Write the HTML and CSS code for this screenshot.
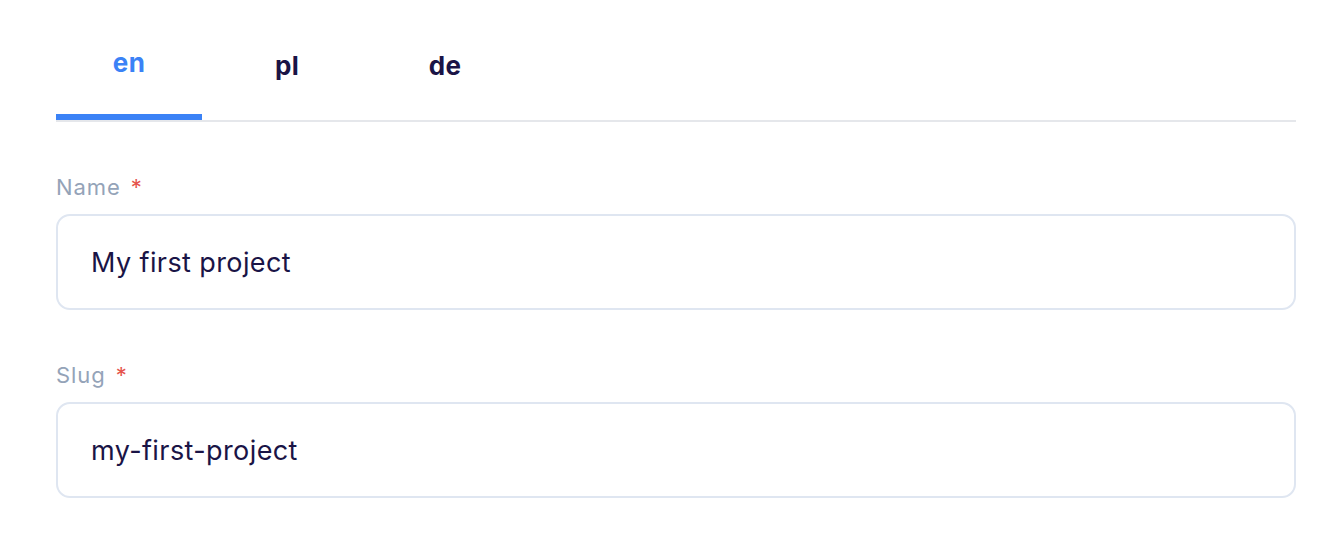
FILE: index.html
```html
<!DOCTYPE html>
<html lang="en">
<head>
<meta charset="utf-8">
<link rel="stylesheet" href="styles.css">
</head>
<body>
<div class="page">
  <div class="tabs">
    <div class="tab tab-active">en</div>
    <div class="tab">pl</div>
    <div class="tab">de</div>
  </div>
  <div class="field">
    <label class="label">Name <span class="req">*</span></label>
    <div class="input">My first project</div>
  </div>
  <div class="field">
    <label class="label">Slug <span class="req">*</span></label>
    <div class="input">my-first-project</div>
  </div>
</div>
</body>
</html>
```
FILE: styles.css
```css
* { box-sizing: border-box; }
html, body { margin: 0; padding: 0; background: #ffffff; }
body { font-family: Inter, "Noto Sans", sans-serif; }
.page {
  width: 1240px;
  margin-left: 56px;
}
.tabs {
  display: flex;
  gap: 12px;
  border-bottom: 2px solid #e5e7eb;
  height: 122px;
}
.tab {
  width: 146px;
  height: 120px;
  display: flex;
  align-items: center;
  justify-content: center;
  padding-top: 10px;
  font-size: 26px;
  font-weight: 700;
  letter-spacing: 0.4px;
  color: #1a1446;
  position: relative;
}
.tab-active {
  color: #3b82f6;
  padding-top: 4px;
}
.tab-active::after {
  content: "";
  position: absolute;
  left: 0;
  right: 0;
  bottom: 0;
  height: 6px;
  background: #3b82f6;
}
.field {
  padding-top: 53px;
  display: flex;
  flex-direction: column;
}
.label {
  font-size: 22px;
  line-height: 26px;
  letter-spacing: 0.9px;
  color: #94a3b8;
  margin-bottom: 14px;
  margin-top: -1px;
}
.req { color: #e5534b; margin-left: 3px; }
.input {
  height: 96px;
  border: 2px solid #dfe6f1;
  border-radius: 14px;
  padding: 0 33px;
  display: flex;
  align-items: center;
  font-size: 27px;
  letter-spacing: 0.4px;
  color: #1a1446;
}
```
